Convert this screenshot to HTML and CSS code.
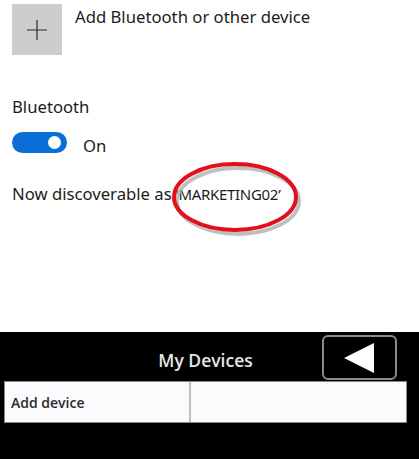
FILE: index.html
```html
<!DOCTYPE html>
<html>
<head>
<meta charset="utf-8">
<link rel="stylesheet" href="styles.css">
</head>
<body>
<div class="screen">
  <section class="settings">
    <div class="add-row">
      <div class="tile">
        <svg width="20" height="20" viewBox="0 0 20 20"><path d="M10 0V20M0 10H20" stroke="#2a2a2a" stroke-width="1.2" fill="none"/></svg>
      </div>
      <div class="add-label">Add Bluetooth or other device</div>
    </div>
    <div class="bt-title">Bluetooth</div>
    <div class="toggle-row">
      <div class="toggle"><span class="knob"></span></div>
      <span class="toggle-label">On</span>
    </div>
    <p class="discover">Now discoverable as <span class="name">‘MARKETING02’</span></p>
    <svg class="circle" width="140" height="82" viewBox="0 0 140 82">
      <ellipse cx="67" cy="39" rx="61" ry="33" fill="none" stroke="#b0b0b0" stroke-width="4" transform="translate(3 4)" opacity="0.8"/>
      <ellipse cx="67" cy="39" rx="61" ry="33" fill="none" stroke="#e3101b" stroke-width="4"/>
    </svg>
  </section>
  <section class="devices">
    <div class="dev-header">
      <span></span>
      <div class="dev-title">My Devices</div>
      <button class="back" type="button">
        <svg width="32" height="30" viewBox="0 0 32 30"><path d="M0 15L30 0V30Z" fill="#fff"/></svg>
      </button>
    </div>
    <div class="dev-table">
      <div class="cell first">Add device</div>
      <div class="cell"></div>
    </div>
  </section>
</div>
</body>
</html>
```
FILE: styles.css
```css
html, body {
  margin: 0;
  padding: 0;
  background: #fff;
}
.screen {
  width: 419px;
  height: 459px;
  display: flex;
  flex-direction: column;
  overflow: hidden;
}
.settings {
  position: relative;
  height: 332px;
  padding: 4px 0 0 12px;
  box-sizing: border-box;
  font-family: "Noto Sans", sans-serif;
  font-size: 16.7px;
  line-height: 22px;
  color: #1c1c1c;
}
.add-row {
  display: flex;
  gap: 13px;
}
.tile {
  width: 50px;
  height: 51px;
  background: #cdcdcd;
  display: flex;
  align-items: center;
  justify-content: center;
}
.add-label {
  margin-top: 2px;
}
.bt-title {
  margin-top: 41px;
}
.toggle-row {
  display: flex;
  align-items: flex-start;
  gap: 16px;
  margin-top: 14px;
}
.toggle {
  width: 55px;
  height: 21px;
  border-radius: 11px;
  background: #0a6ed8;
  display: flex;
  align-items: center;
  justify-content: flex-end;
  padding-right: 6px;
  box-sizing: border-box;
}
.knob {
  width: 13px;
  height: 13px;
  border-radius: 50%;
  background: #fff;
}
.toggle-label {
  margin-top: 3px;
}
.discover {
  margin: 26px 0 0;
}
.name {
  font-size: 15px;
  letter-spacing: -0.3px;
}
.circle {
  position: absolute;
  left: 168px;
  top: 158px;
}
.devices {
  flex: 1;
  background: #000;
  font-family: "Open Sans", sans-serif;
}
.dev-header {
  display: grid;
  grid-template-columns: 1fr auto 1fr;
  align-items: center;
  height: 49px;
  padding-top: 2px;
  box-sizing: border-box;
}
.dev-title {
  color: #e6e6e6;
  font-size: 17.5px;
  font-weight: 600;
  padding: 4px 8px 0 0;
}
.back {
  justify-self: end;
  margin-right: 22px;
  width: 75px;
  height: 45px;
  border: 2px solid #8a8a8a;
  border-radius: 6px;
  background: #000;
  display: flex;
  align-items: center;
  justify-content: center;
  padding: 0;
}
.dev-table {
  display: flex;
  margin: 0 12px 0 4px;
  height: 42px;
  background: #fbfafc;
  border: 1px solid #888;
  box-sizing: border-box;
}
.cell {
  flex: 1;
  display: flex;
  align-items: center;
  font-size: 14px;
  font-weight: 600;
  color: #2a2a2a;
}
.cell.first {
  flex: 0 0 186px;
  padding-left: 6px;
  box-sizing: border-box;
  border-right: 2px solid #bdbdbd;
}
```
